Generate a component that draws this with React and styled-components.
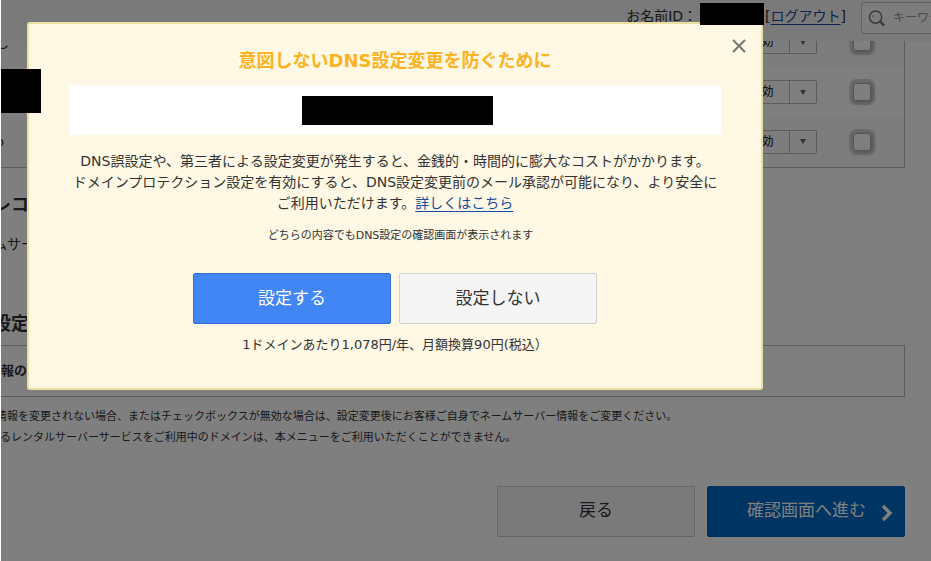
import React from "react";
import styled, { createGlobalStyle, css } from "styled-components";

const GlobalStyle = createGlobalStyle`
  *, *::before, *::after { box-sizing: border-box; }
  body { margin: 0; background: #fff; overflow: hidden; }
  body, button, input, select {
    font-family: "DejaVu Sans", "Noto Sans CJK JP", sans-serif;
    color: #333;
  }
  h1, h2, p { margin: 0; }
`;

const Screen = styled.div`
  position: relative;
  height: 100vh;
  margin-left: 1px;
  overflow: hidden;
  background: #fff;
`;

const Header = styled.header`
  position: relative;
  display: flex;
  align-items: flex-start;
  justify-content: flex-end;
  height: 41px;
  background: #f4f4f4;
  font-size: 14px;
  line-height: 32px;
  white-space: nowrap;
  overflow: hidden;
`;

const Link = styled.a`
  color: #1a4a9c;
  text-decoration: underline;
  text-underline-offset: 3px;
`;

const IdGap = styled.span`
  width: 68px;
`;

const Search = styled.label`
  display: flex;
  align-items: center;
  flex: none;
  gap: 8px;
  width: 70px;
  height: 32px;
  margin: 2px 0 0 15px;
  padding-left: 6px;
  border: 1px solid #c4c4c4;
  border-right: 0;
  border-radius: 4px 0 0 4px;
  background: #fafafa;
`;

const SearchInput = styled.input`
  width: 40px;
  min-width: 0;
  padding: 0;
  border: 0;
  background: none;
  font-size: 12px;
  &::placeholder { color: #999; opacity: 1; }
`;

const Content = styled.main`
  display: flex;
  flex-direction: column;
  margin: 0 26px 0 -8px;
`;

const TableBox = styled.table`
  width: 100%;
  margin-top: -24px;
  border-collapse: collapse;
  border-right: 1px solid #bbb;
  border-bottom: 1px solid #bbb;
  font-size: 13px;
`;

const Row = styled.tr`
  height: 50px;
  background: ${(p) => (p.$alt ? "#fafafa" : "#fff")};
`;

const Cell = styled.td`
  padding: 0 0 0 ${(p) => p.$left || 0}px;
  width: ${(p) => (p.$w ? p.$w + "px" : "auto")};
  text-align: ${(p) => p.$align || "left"};
`;

const SelectBox = styled.span`
  display: inline-flex;
  align-items: stretch;
  width: 80px;
  height: 24px;
  border: 1px solid #bbb;
  border-radius: 2px;
  vertical-align: middle;
`;

const Select = styled.select`
  appearance: none;
  flex: 1;
  min-width: 0;
  padding: 0 0 0 12px;
  border: 0;
  background: none;
  font-size: 12px;
  color: #000;
`;

const Arrow = styled.span`
  display: flex;
  align-items: center;
  justify-content: center;
  width: 27px;
  border-left: 1px solid #bbb;
`;

const Check = styled.input`
  appearance: none;
  display: inline-block;
  width: 18px;
  height: 18px;
  margin: 0;
  border: 1px solid #aaa;
  border-radius: 3px;
  background: #fff;
  box-shadow: 1px 1px 4px 1px #aaa, 0 0 0 4px #dcdcdc;
  vertical-align: middle;
`;

const Heading = styled.h2`
  margin-top: ${(p) => p.$top}px;
  font-size: 18px;
  line-height: 24px;
`;

const Text = styled.p`
  margin-top: 15px;
  font-size: 14px;
  line-height: 24px;
`;

const InfoBox = styled.div`
  display: flex;
  align-items: center;
  height: 52px;
  margin-top: 9px;
  padding: 0 0 2px 7px;
  border: 1px solid #bbb;
  font-size: 13px;
  font-weight: bold;
`;

const Notes = styled.div`
  margin-top: 9px;
  font-size: 11px;
  line-height: 21px;
  white-space: nowrap;
`;

const Note = styled.p`
  padding-left: ${(p) => p.$inset}px;
`;

const Actions = styled.div`
  display: flex;
  justify-content: ${(p) => p.$justify};
  gap: ${(p) => p.$gap}px;
  margin-top: ${(p) => p.$top}px;
`;

const tones = {
  blue: css`background: #4285f4; border-color: #2f6fd6; color: #fff;`,
  light: css`background: #f5f5f5; border-color: #d0d0d0; color: #333;`,
  navy: css`background: #0068c4; border-color: #0060b6; color: #fff;`,
};

const Button = styled.button`
  display: flex;
  align-items: center;
  justify-content: center;
  width: 198px;
  height: 51px;
  padding: 0 0 2px;
  border: 1px solid;
  border-radius: 2px;
  font-size: 17px;
  line-height: 24px;
  ${(p) => tones[p.$tone]}
`;

const NextButton = styled(Button)`
  gap: 15px;
  justify-content: flex-end;
  padding-right: 11px;
  svg { margin-top: 6px; }
`;

const Overlay = styled.div`
  position: absolute;
  inset: 0;
  background: rgba(0, 0, 0, 0.5);
`;

const Dialog = styled.section`
  position: absolute;
  top: 22px;
  left: 26px;
  right: 168px;
  display: flex;
  flex-direction: column;
  padding: 25px 40px 33px;
  border: 2px solid #e8dfa0;
  border-radius: 3px;
  background: #fef8e4;
  text-align: center;
`;

const Close = styled.button`
  position: absolute;
  top: 12px;
  right: 12px;
  display: flex;
  padding: 2px;
  border: 0;
  background: none;
`;

const Title = styled.h1`
  font-size: 18px;
  line-height: 24px;
  color: #fbb321;
`;

const Domain = styled.div`
  display: flex;
  align-items: center;
  justify-content: center;
  height: 50px;
  margin-top: 12px;
  padding-left: 4px;
  background: #fff;
`;

const Lead = styled.p`
  margin-top: 16px;
  font-size: 14px;
  line-height: 21px;
`;

const Small = styled.p`
  margin-top: 11px;
  padding-left: 11px;
  font-size: 11px;
  line-height: 21px;
`;

const Price = styled.p`
  margin-top: 10px;
  font-size: 13px;
  line-height: 21px;
`;

const Mask = styled.span`
  display: block;
  width: 191px;
  height: 29px;
  background: #000;
`;

const IdMask = styled(Mask)`
  position: absolute;
  top: 3px;
  right: 167px;
  width: 64px;
  height: 22px;
`;

const RowMask = styled(Mask)`
  position: absolute;
  top: 69px;
  left: 0;
  width: 40px;
  height: 44px;
`;

const rows = [
  { name: "し", alt: true },
  { name: "", alt: false },
  { name: "o", alt: true },
];

export default function App() {
  return (
    <>
      <GlobalStyle />
      <Screen>
        <Header>
          <span>お名前ID：</span>
          <IdGap />
          <span>[<Link href="#logout">ログアウト</Link>]</span>
          <Search>
            <svg width="18" height="18" viewBox="0 0 18 18" fill="none" stroke="#777" strokeWidth="1.6">
              <circle cx="8" cy="8" r="6.5" />
              <path d="M12.5 12.5 17 17" strokeWidth="2.4" />
              <path d="M5 8a3 3 0 0 1 1-2" strokeWidth="1" />
            </svg>
            <SearchInput placeholder="キーワード" aria-label="キーワード" />
          </Search>
        </Header>
        <Content>
          <TableBox>
            <tbody>
              {rows.map((row, i) => (
                <Row key={i} $alt={row.alt}>
                  <Cell $left={3}>{row.name}</Cell>
                  <Cell $w={120} $align="right">
                    <SelectBox>
                      <Select aria-label="状態" defaultValue="有効">
                        <option>有効</option>
                        <option>無効</option>
                      </Select>
                      <Arrow>
                        <svg width="6" height="5" viewBox="0 0 6 5" fill="#666"><path d="M0 0h6L3 5z" /></svg>
                      </Arrow>
                    </SelectBox>
                  </Cell>
                  <Cell $w={88} $left={4} $align="center">
                    <Check type="checkbox" aria-label="選択" />
                  </Cell>
                </Row>
              ))}
            </tbody>
          </TableBox>
          <Heading $top={25}>レコード設定</Heading>
          <Text>ムサーバー</Text>
          <Heading $top={56}>設定</Heading>
          <InfoBox>報の変更</InfoBox>
          <Notes>
            <Note $inset={3}>情報を変更されない場合、またはチェックボックスが無効な場合は、設定変更後にお客様ご自身でネームサーバー情報をご変更ください。</Note>
            <Note $inset={7}>るレンタルサーバーサービスをご利用中のドメインは、本メニューをご利用いただくことができません。</Note>
          </Notes>
          <Actions $justify="flex-end" $gap={12} $top={38}>
            <Button $tone="light">戻る</Button>
            <NextButton $tone="navy">
              確認画面へ進む
              <svg width="12" height="18" viewBox="0 0 12 18" fill="none" stroke="#fff" strokeWidth="3.4"><path d="M2 2l7 7-7 7" /></svg>
            </NextButton>
          </Actions>
        </Content>
        <Overlay />
        <Dialog role="dialog" aria-modal="true" aria-labelledby="dialog-title">
          <Close aria-label="閉じる">
            <svg width="16" height="16" viewBox="0 0 16 16" stroke="#777" strokeWidth="2"><path d="M2 2l12 12M14 2 2 14" /></svg>
          </Close>
          <Title id="dialog-title">意図しないDNS設定変更を防ぐために</Title>
          <Domain><Mask /></Domain>
          <Lead>
            DNS誤設定や、第三者による設定変更が発生すると、金銭的・時間的に膨大なコストがかかります。<br />
            ドメインプロテクション設定を有効にすると、DNS設定変更前のメール承認が可能になり、より安全に<br />
            ご利用いただけます。<Link href="#detail">詳しくはこちら</Link>
          </Lead>
          <Small>どちらの内容でもDNS設定の確認画面が表示されます</Small>
          <Actions $justify="center" $gap={8} $top={27}>
            <Button $tone="blue">設定する</Button>
            <Button $tone="light">設定しない</Button>
          </Actions>
          <Price>1ドメインあたり1,078円/年、月額換算90円(税込）</Price>
        </Dialog>
        <IdMask />
        <RowMask />
      </Screen>
    </>
  );
}
